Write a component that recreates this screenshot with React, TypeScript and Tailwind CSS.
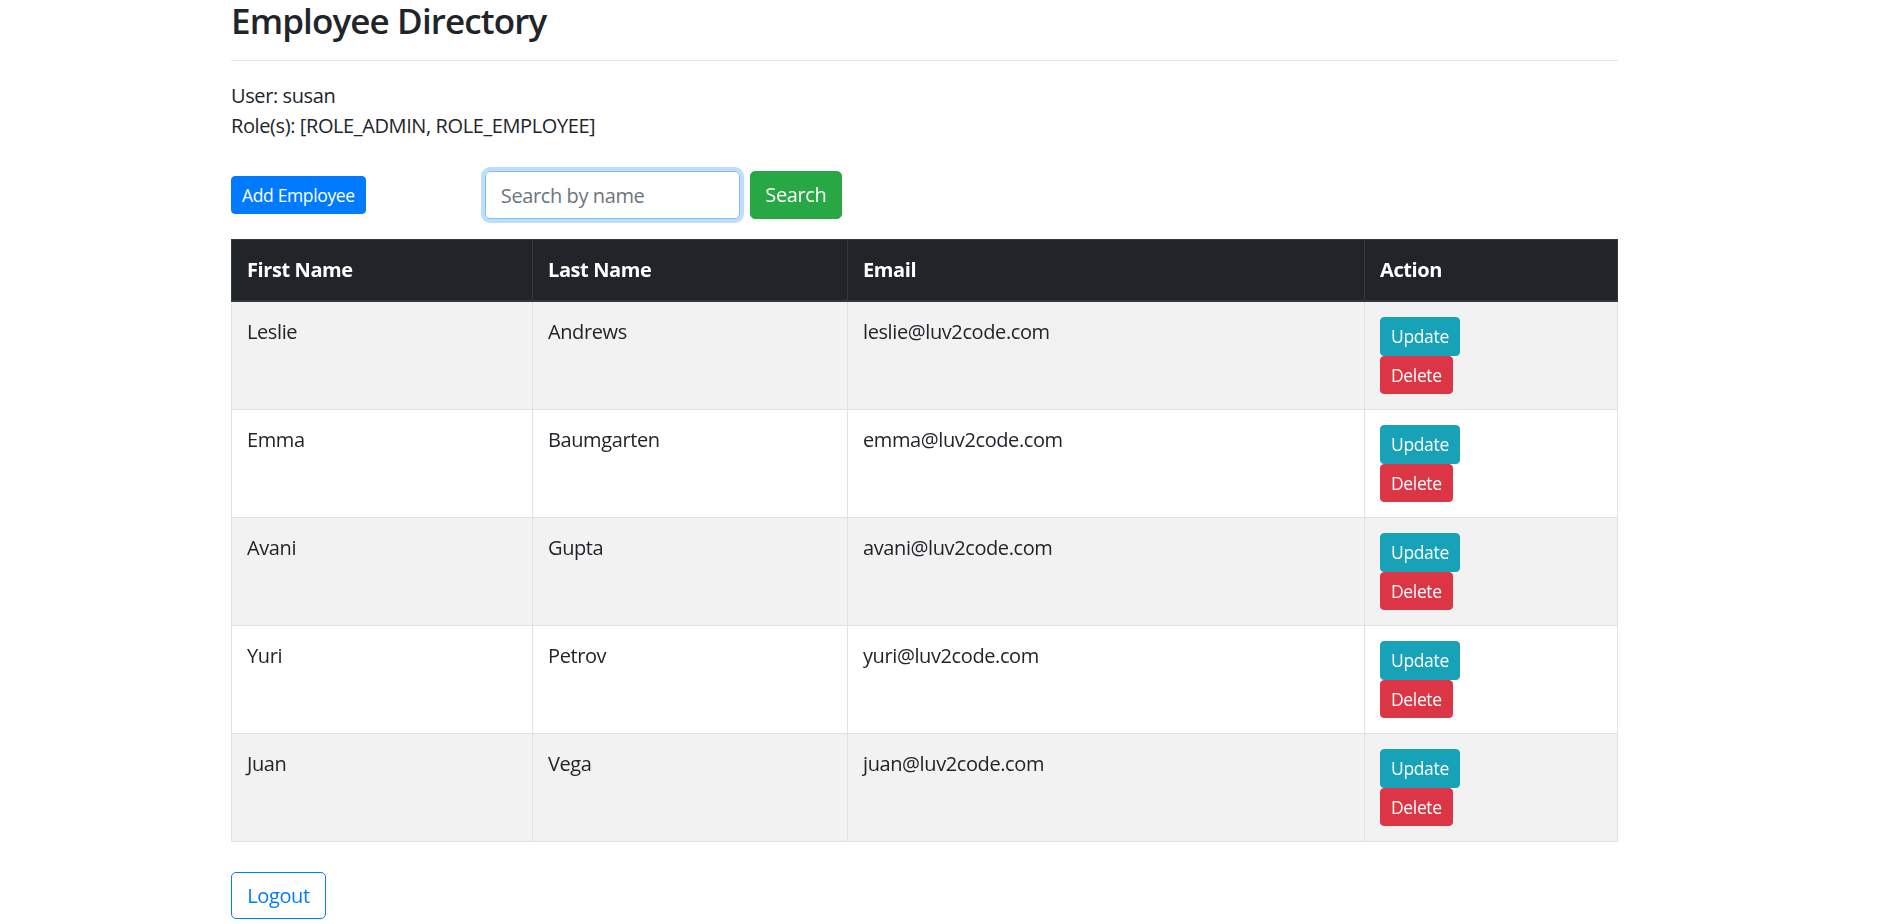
import React from "react";

type Employee = {
  firstName: string;
  lastName: string;
  email: string;
};

const employees: Employee[] = [
  { firstName: "Leslie", lastName: "Andrews", email: "leslie@luv2code.com" },
  { firstName: "Emma", lastName: "Baumgarten", email: "emma@luv2code.com" },
  { firstName: "Avani", lastName: "Gupta", email: "avani@luv2code.com" },
  { firstName: "Yuri", lastName: "Petrov", email: "yuri@luv2code.com" },
  { firstName: "Juan", lastName: "Vega", email: "juan@luv2code.com" },
];

export default function App() {
  return (
    <div className="min-h-screen bg-white text-[#212529] font-['Open_Sans','Noto_Sans',sans-serif]">
      <div className="ml-[231px] w-[1387px]">
        {/* Title */}
        <h3 className="text-[35px] leading-[42px] font-semibold tracking-[-0.025em]">
          Employee Directory
        </h3>
        <hr className="mt-[18px] mb-5 border-0 border-t border-black/10" />

        {/* Current user info */}
        <div className="text-[20px] leading-[30px] tracking-[-0.02em]">
          User: susan
          <br />
          Role(s): [ROLE_ADMIN, ROLE_EMPLOYEE]
        </div>

        {/* Toolbar */}
        <div className="mt-[30px] flex items-center">
          <button className="h-[38px] px-[10px] rounded-[4px] border border-[#007bff] bg-[#007bff] text-white text-[17.5px] leading-[26px] tracking-[-0.02em]">
            Add Employee
          </button>
          <form className="ml-[119px] flex items-center" onSubmit={(e) => e.preventDefault()}>
            <input
              autoFocus
              placeholder="Search by name"
              className="w-[255px] h-[48px] px-[15px] rounded-[5px] border border-[#80bdff] text-[20px] tracking-[-0.02em] text-[#495057] placeholder:text-[#6c757d] outline-none shadow-[0_0_0_4px_rgba(0,123,255,0.25)]"
            />
            <button className="ml-[10px] h-[48px] w-[92px] rounded-[5px] border border-[#28a745] bg-[#28a745] text-white text-[20px] tracking-[-0.02em]">
              Search
            </button>
          </form>
        </div>

        {/* Employee table */}
        <table className="mt-5 w-full table-fixed border-collapse border border-[#dee2e6] text-[20px] leading-[30px] tracking-[-0.02em]">
          <colgroup>
            <col className="w-[301px]" />
            <col className="w-[315px]" />
            <col className="w-[517px]" />
            <col />
          </colgroup>
          <thead>
            <tr className="bg-[#212529] text-white">
              <th className="text-left font-bold p-[15px] border border-[#32383e] border-b-2">First Name</th>
              <th className="text-left font-bold p-[15px] border border-[#32383e] border-b-2">Last Name</th>
              <th className="text-left font-bold p-[15px] border border-[#32383e] border-b-2">Email</th>
              <th className="text-left font-bold p-[15px] border border-[#32383e] border-b-2">Action</th>
            </tr>
          </thead>
          <tbody>
            {employees.map((emp, i) => (
              <tr key={emp.email} className={i % 2 === 0 ? "bg-[#f2f2f2]" : "bg-white"}>
                <td className="align-top p-[15px] border border-[#dee2e6]">{emp.firstName}</td>
                <td className="align-top p-[15px] border border-[#dee2e6]">{emp.lastName}</td>
                <td className="align-top p-[15px] border border-[#dee2e6]">{emp.email}</td>
                <td className="align-top p-[15px] border border-[#dee2e6]">
                  <div className="flex flex-col items-start">
                    <button className="h-[38.5px] px-[10px] rounded-[4px] border border-[#17a2b8] bg-[#17a2b8] text-white text-[17.5px] leading-[26px] tracking-[-0.02em]">
                      Update
                    </button>
                    <button className="h-[38.5px] px-[10px] rounded-[4px] border border-[#dc3545] bg-[#dc3545] text-white text-[17.5px] leading-[26px] tracking-[-0.02em]">
                      Delete
                    </button>
                  </div>
                </td>
              </tr>
            ))}
          </tbody>
        </table>

        {/* Logout */}
        <button className="mt-[30px] h-[47px] w-[95px] rounded-[5px] border border-[#007bff] bg-white text-[#007bff] text-[20px] tracking-[-0.02em]">
          Logout
        </button>
      </div>
    </div>
  );
}
